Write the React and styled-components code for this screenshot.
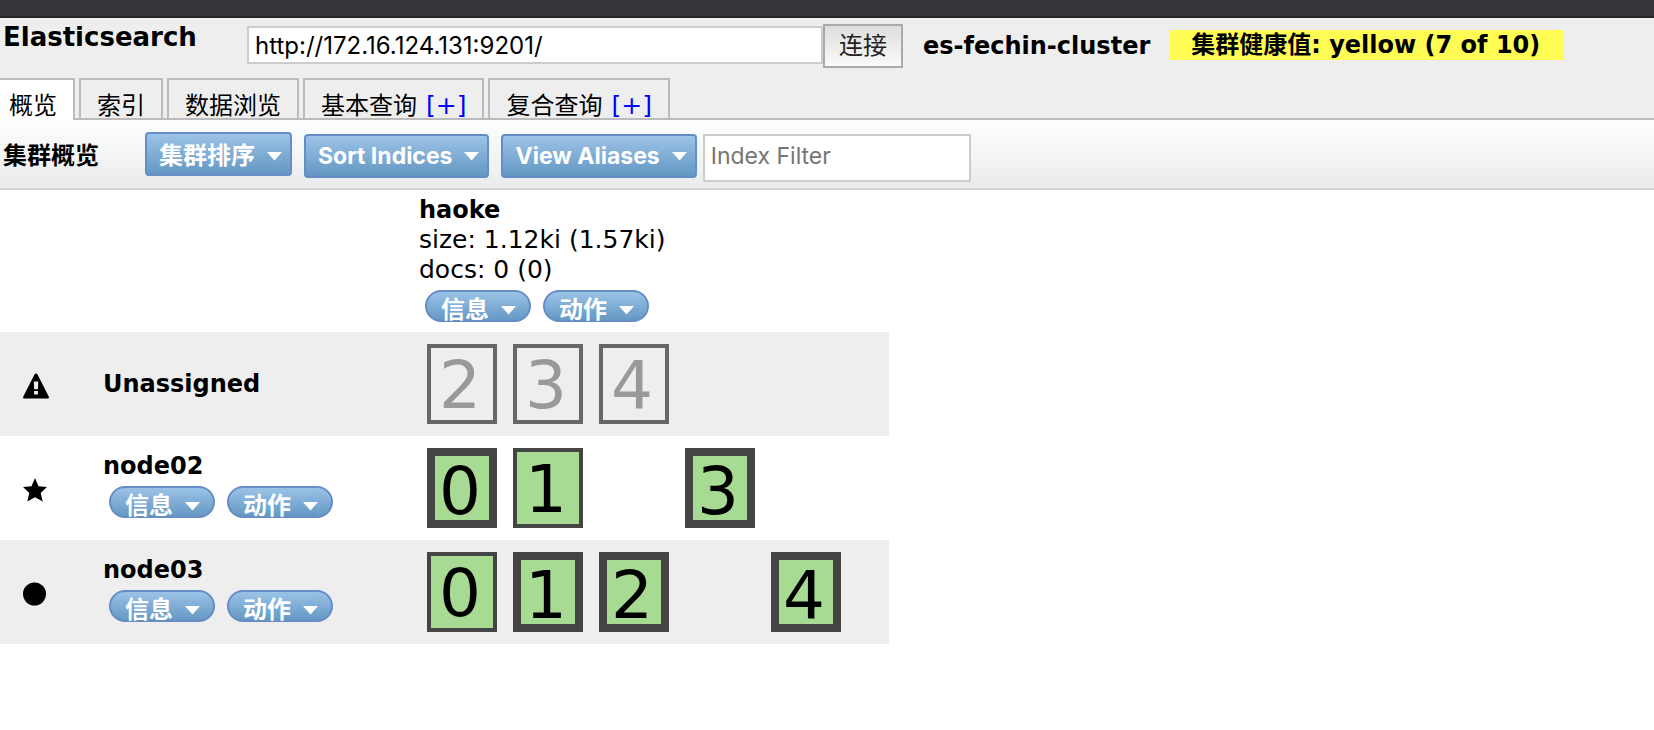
import React from "react";
import styled, { createGlobalStyle } from "styled-components";

const sans = '"DejaVu Sans", "Noto Sans CJK SC", sans-serif';
const controlFont = 'Inter, "Noto Sans CJK SC", sans-serif';

const GlobalStyle = createGlobalStyle`
  *, *::before, *::after { box-sizing: border-box; }
  body {
    margin: 0;
    background: #fff;
    color: #000;
    font: 24px/30px ${sans};
  }
  button, input { font-family: ${controlFont}; }
`;

const WindowEdge = styled.div`
  height: 18px;
  background: #343539;
  border-bottom: 2px solid #262629;
`;

const Header = styled.header`
  background: #eee;
`;

const ConnectBar = styled.div`
  display: flex;
  align-items: flex-start;
  height: 60px;
  padding: 6px 3px 0;
`;

const Title = styled.h1`
  flex: none;
  width: 244px;
  margin: -2px 0 0;
  font-size: 26px;
  line-height: 30px;
`;

const TextField = styled.input`
  width: ${(p) => p.$width};
  height: ${(p) => p.$height};
  padding: 0 6px;
  border: 2px solid #ccc;
  border-radius: 0;
  background: #fff;
  color: #000;
  font-size: 24px;
  outline: none;
  &::placeholder { color: #757575; opacity: 1; }
`;

const FilterField = styled(TextField)`
  padding-bottom: 4px;
  font-size: 23px;
`;

const ConnectForm = styled.form`
  display: flex;
  align-items: flex-start;
`;

const UrlField = styled(TextField)`
  margin-top: 2px;
`;

const ConnectButton = styled.button`
  width: 80px;
  height: 44px;
  padding: 0;
  border: 2px solid #aaa;
  background: linear-gradient(#ddd, #fafafa);
  color: #222;
  font-size: 24px;
  line-height: 30px;
`;

const ClusterName = styled.strong`
  margin-left: 20px;
  padding-top: 7px;
`;

const Health = styled.strong`
  min-width: 394px;
  height: 30px;
  margin: 6px 0 0 20px;
  padding: 1px 20px 0 21px;
  background: #fffc54;
  line-height: 29px;
  white-space: nowrap;
`;

const Tabs = styled.nav`
  display: flex;
  gap: 4px;
  height: 42px;
  box-shadow: inset 0 -2px #bbb;
`;

const Tab = styled.div`
  display: flex;
  gap: 9px;
  height: ${(p) => (p.$active ? "42px" : "40px")};
  padding: ${(p) => (p.$active ? "14px 16px 0 9px" : "14px 16px 0")};
  border: 2px solid #bbb;
  border-width: ${(p) => (p.$active ? "2px 2px 0 0" : "2px 2px 0")};
  background: ${(p) => (p.$active ? "#fff" : "transparent")};
  line-height: 24px;
  white-space: nowrap;
`;

const AddLink = styled.a`
  color: #00f;
  font-size: 25px;
  text-decoration: none;
`;

const Toolbar = styled.section`
  display: flex;
  align-items: flex-start;
  height: 70px;
  padding: 12px 3px 0;
  background: linear-gradient(#fdfefe, #e9ebed);
  border-bottom: 2px solid #d2d5d7;
`;

const ToolbarTitle = styled.h2`
  flex: none;
  width: 142px;
  margin: 0;
  padding-top: 9px;
  font-size: 24px;
  line-height: 30px;
`;

const IndexControls = styled.div`
  display: flex;
  align-items: flex-start;
  gap: 12px;
  padding: 2px 6px 0 12px;
`;

const FilterSlot = styled.div`
  display: flex;
  padding-top: 2px;
`;

const MenuButton = styled.button`
  display: flex;
  align-items: center;
  justify-content: space-between;
  gap: 12px;
  flex: none;
  height: 44px;
  padding: ${(p) => (p.$latin ? "0 8px 0 12px" : "3px 8px 0 12px")};
  border: 2px solid #668dc6;
  border-radius: 4px;
  background: linear-gradient(#9fc5e9, #6095c1) border-box;
  color: #fff;
  font-size: ${(p) => (p.$latin ? "23px" : "24px")};
  font-weight: 700;
  line-height: 30px;
  white-space: nowrap;
`;

const PillButton = styled(MenuButton)`
  height: 32px;
  padding: 8px 13px 0 14px;
  border-radius: 16px;
  line-height: 20px;
`;

const Overview = styled.table`
  border-collapse: collapse;
  table-layout: fixed;
  width: 889px;
`;

const IconColumn = styled.col`
  width: 103px;
`;

const NameColumn = styled.col`
  width: 316px;
`;

const Cell = styled.td`
  padding: 0;
  text-align: left;
  font-weight: 400;
`;

const IndexHead = styled.th`
  height: 142px;
  padding: 5px 0 0;
  text-align: left;
  font-weight: 400;
  vertical-align: top;
`;

const NodeRow = styled.tr`
  height: 104px;
  background: ${(p) => (p.$shaded ? "#eee" : "#fff")};
`;

const IconCell = styled(Cell)`
  padding: 4px 0 0 23px;
  svg { display: block; }
`;

const Name = styled.div`
  font-weight: 700;
`;

const Stat = styled.div`
  font-size: 25px;
`;

const Actions = styled.div`
  display: flex;
  gap: 12px;
  padding: 5px 6px 7px;
`;

const Shards = styled.div`
  display: grid;
  grid-template-columns: repeat(5, 70px);
  gap: 16px;
  padding-left: 8px;
`;

const Shard = styled.div`
  display: flex;
  align-items: center;
  justify-content: center;
  grid-column: ${(p) => p.$slot};
  height: 80px;
  padding: ${(p) => (p.$primary ? "8px 4px 0 0" : "4px 4px 0 0")};
  border: ${(p) => (p.$primary ? "8px" : "4px")} solid ${(p) => (p.$assigned ? "#444" : "#666")};
  background: ${(p) => (p.$assigned ? "#a7da92" : "transparent")};
  color: ${(p) => (p.$assigned ? "#000" : "#999")};
  font-size: 66px;
  line-height: 66px;
`;

function Caret() {
  return (
    <svg width="15" height="10" viewBox="0 0 15 10" aria-hidden="true">
      <path d="M0 1h15L7.5 9.5z" fill="#fff" />
    </svg>
  );
}

const icons = {
  warning: (
    <svg width="26" height="26" viewBox="0 0 26 26" aria-hidden="true">
      <path
        fillRule="evenodd"
        d="M13 0.6c.7 0 1.1.4 1.5 1l11.200 22c.5 1 .1 1.800-1 1.800H1.300c-1.100 0-1.500-.8-1-1.800l11.200-22c.4-.6.800-1 1.500-1zM10.800 8.500l.4 7.700h3.700l.4-7.700zM11.100 18v3.500h3.800V18z"
      />
    </svg>
  ),
  star: (
    <svg width="24" height="24" viewBox="0 0 24 24" aria-hidden="true">
      <path d="M12 0l3.500 8.300 8.500.8-6.300 5.800L19.700 23.500 12 19.200 4.300 23.500l2-8.600L0 9.100l8.500-.8z" />
    </svg>
  ),
  circle: (
    <svg width="24" height="24" viewBox="0 0 24 24" aria-hidden="true">
      <circle cx="11.5" cy="12" r="11.5" />
    </svg>
  ),
};

const nodes = [
  {
    name: "Unassigned",
    icon: "warning",
    shaded: true,
    shards: [{ id: 2, slot: 1 }, { id: 3, slot: 2 }, { id: 4, slot: 3 }],
  },
  {
    name: "node02",
    icon: "star",
    assigned: true,
    shards: [{ id: 0, slot: 1, primary: true }, { id: 1, slot: 2 }, { id: 3, slot: 4, primary: true }],
  },
  {
    name: "node03",
    icon: "circle",
    assigned: true,
    shaded: true,
    shards: [
      { id: 0, slot: 1 },
      { id: 1, slot: 2, primary: true },
      { id: 2, slot: 3, primary: true },
      { id: 4, slot: 5, primary: true },
    ],
  },
];

function Menu({ label, latin }) {
  return (
    <MenuButton type="button" $latin={latin}>
      {label}
      <Caret />
    </MenuButton>
  );
}

function ItemActions() {
  return (
    <Actions>
      {["信息", "动作"].map((label) => (
        <PillButton type="button" key={label}>
          {label}
          <Caret />
        </PillButton>
      ))}
    </Actions>
  );
}

export default function App() {
  return (
    <>
      <GlobalStyle />
      <WindowEdge />
      <Header>
        <ConnectBar>
          <Title>Elasticsearch</Title>
          <ConnectForm onSubmit={(e) => e.preventDefault()}>
            <UrlField
              aria-label="URL"
              $width="576px"
              $height="38px"
              defaultValue="http://172.16.124.131:9201/"
            />
            <ConnectButton type="submit">连接</ConnectButton>
          </ConnectForm>
          <ClusterName>es-fechin-cluster</ClusterName>
          <Health>集群健康值: yellow (7 of 10)</Health>
        </ConnectBar>
        <Tabs>
          <Tab $active>概览</Tab>
          <Tab>索引</Tab>
          <Tab>数据浏览</Tab>
          <Tab>基本查询<AddLink href="#query">[+]</AddLink></Tab>
          <Tab>复合查询<AddLink href="#compound">[+]</AddLink></Tab>
        </Tabs>
      </Header>
      <Toolbar>
        <ToolbarTitle>集群概览</ToolbarTitle>
        <Menu label="集群排序" />
        <IndexControls>
          <Menu latin label="Sort Indices" />
          <Menu latin label="View Aliases" />
        </IndexControls>
        <FilterSlot>
          <FilterField aria-label="Index Filter" placeholder="Index Filter" $width="268px" $height="48px" />
        </FilterSlot>
      </Toolbar>
      <Overview>
        <colgroup>
          <IconColumn />
          <NameColumn />
          <col />
        </colgroup>
        <thead>
          <tr>
            <Cell />
            <Cell />
            <IndexHead scope="col">
              <Name>haoke</Name>
              <Stat>size: 1.12ki (1.57ki)</Stat>
              <Stat>docs: 0 (0)</Stat>
              <ItemActions />
            </IndexHead>
          </tr>
        </thead>
        <tbody>
          {nodes.map((node) => (
            <NodeRow key={node.name} $shaded={node.shaded}>
              <IconCell>{icons[node.icon]}</IconCell>
              <Cell as="th" scope="row">
                <Name>{node.name}</Name>
                {node.assigned && <ItemActions />}
              </Cell>
              <Cell>
                <Shards>
                  {node.shards.map((s) => (
                    <Shard key={s.id} $slot={s.slot} $primary={s.primary} $assigned={node.assigned}>
                      {s.id}
                    </Shard>
                  ))}
                </Shards>
              </Cell>
            </NodeRow>
          ))}
        </tbody>
      </Overview>
    </>
  );
}
